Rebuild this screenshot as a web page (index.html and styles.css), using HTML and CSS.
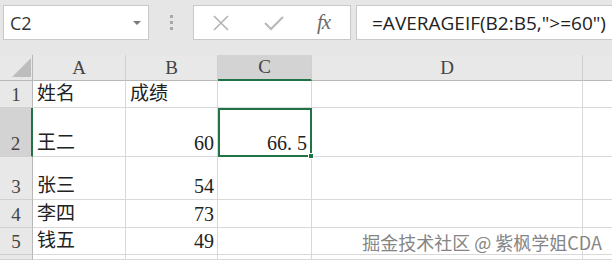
FILE: index.html
```html
<!DOCTYPE html>
<html lang="zh">
<head>
<meta charset="utf-8">
<link rel="stylesheet" href="styles.css">
</head>
<body>
<div class="app">
  <div class="toolbar">
    <div class="namebox">
      <span class="name">C2</span>
      <svg class="dd" width="8" height="5" viewBox="0 0 8 5"><path d="M0 0H8L4 4Z" fill="#7a7a7a"/></svg>
    </div>
    <div class="grip"><i></i><i></i><i></i></div>
    <div class="buttons">
      <svg class="ico" width="20" height="18" viewBox="0 0 20 18"><path d="M3 2L17 16M17 2L3 16" stroke="#b4b4b4" stroke-width="1.6" fill="none"/></svg>
      <svg class="ico" width="22" height="18" viewBox="0 0 22 18"><path d="M2 9L8 15L20 3" stroke="#b8b8b8" stroke-width="2" fill="none"/></svg>
      <span class="fx">fx</span>
    </div>
    <div class="formula">=AVERAGEIF(B2:B5,"&gt;=60")</div>
  </div>
  <div class="sheet">
    <div class="h corner"><span class="tri"></span></div>
    <div class="h col">A</div>
    <div class="h col">B</div>
    <div class="h col sel-col">C</div>
    <div class="h col">D</div>
    <div class="h col last"></div>

    <div class="h row">1</div>
    <div class="c">姓名</div>
    <div class="c">成绩</div>
    <div class="c"></div>
    <div class="c"></div>
    <div class="c last"></div>

    <div class="h row sel-row">2</div>
    <div class="c">王二</div>
    <div class="c num">60</div>
    <div class="c num active">66<span class="dot">.</span>5<span class="handle"></span></div>
    <div class="c"></div>
    <div class="c last"></div>

    <div class="h row">3</div>
    <div class="c">张三</div>
    <div class="c num">54</div>
    <div class="c"></div>
    <div class="c"></div>
    <div class="c last"></div>

    <div class="h row">4</div>
    <div class="c">李四</div>
    <div class="c num">73</div>
    <div class="c"></div>
    <div class="c"></div>
    <div class="c last"></div>

    <div class="h row">5</div>
    <div class="c">钱五</div>
    <div class="c num">49</div>
    <div class="c"></div>
    <div class="c"></div>
    <div class="c last"></div>

    <div class="h row"></div>
    <div class="c"></div>
    <div class="c"></div>
    <div class="c"></div>
    <div class="c"></div>
    <div class="c last"></div>
  </div>
  <div class="watermark">掘金技术社区 @ 紫枫学姐CDA</div>
</div>
</body>
</html>
```
FILE: styles.css
```css
* { box-sizing: border-box; }
html, body { margin: 0; padding: 0; }
body {
  width: 612px;
  height: 260px;
  overflow: hidden;
  background: #e6e6e6;
  font-family: "Liberation Serif", "Noto Sans CJK SC", serif;
}
.app {
  position: relative;
  width: 612px;
  height: 260px;
  overflow: hidden;
}
.toolbar {
  height: 55px;
  display: flex;
  align-items: flex-start;
  padding: 5px 0 0 3px;
  background: #e6e6e6;
}
.namebox {
  width: 146px;
  height: 35px;
  background: #fff;
  border: 1px solid #c9c9c9;
  display: flex;
  align-items: center;
  justify-content: space-between;
  padding: 0 7px 0 6px;
}
.name {
  font-family: "Open Sans", "Liberation Sans", sans-serif;
  font-size: 18px;
  color: #333;
}
.dd { margin-top: 1px; }
.grip {
  width: 44px;
  height: 35px;
  display: flex;
  flex-direction: column;
  align-items: center;
  justify-content: center;
  gap: 3px;
}
.grip i {
  width: 3px;
  height: 3px;
  background: #a8a8a8;
  display: block;
}
.buttons {
  width: 158px;
  height: 35px;
  background: #fff;
  border: 1px solid #c9c9c9;
  display: flex;
  align-items: center;
  padding: 0 0 0 17px;
}
.buttons .ico:nth-child(1) { margin-right: 32px; }
.buttons .ico:nth-child(2) { margin-right: 32px; }
.fx {
  font-family: "Liberation Serif", serif;
  font-style: italic;
  font-size: 21px;
  color: #6b6b6b;
  letter-spacing: -1px;
}
.formula {
  margin-left: 5px;
  flex: 1;
  height: 35px;
  background: #fff;
  border: 1px solid #c9c9c9;
  border-right: none;
  padding-left: 15px;
  display: flex;
  align-items: center;
  font-family: "Open Sans", "Liberation Sans", sans-serif;
  font-size: 19px;
  color: #222;
  white-space: nowrap;
  overflow: hidden;
}
.sheet {
  display: grid;
  grid-template-columns: 33px 93px 92px 94px 271px 29px;
  grid-template-rows: 26px 27px 49px 43px 28px 27px 5px;
  background: #fff;
}
.h {
  background: #e8e8e8;
  color: #444;
  font-size: 19px;
  display: flex;
  align-items: center;
  justify-content: center;
  border-right: 1px solid #d0d0d0;
  border-bottom: 1px solid #d0d0d0;
}
.col { border-bottom: 1px solid #b8b8b8; }
.col.last { border-right: none; }
.row { border-right: 1px solid #b8b8b8; align-items: flex-end; padding-bottom: 1px; }
.corner { position: relative; border-bottom: 1px solid #b8b8b8; border-right: 1px solid #b8b8b8; }
.tri {
  position: absolute;
  right: 1px;
  bottom: 3px;
  width: 0;
  height: 0;
  border-left: 19px solid transparent;
  border-bottom: 19px solid #bdbdbd;
}
.sel-col {
  background: #d3d3d3;
  border-bottom: 2px solid #217346;
}
.sel-row {
  background: #d3d3d3;
  border-right: 2px solid #217346;
}
.c {
  background: #fff;
  border-right: 1px solid #d9d9d9;
  border-bottom: 1px solid #d9d9d9;
  font-size: 19px;
  color: #222;
  display: flex;
  align-items: flex-end;
  padding: 0 3px 1px 4px;
  line-height: 24px;
}
.c.num { font-size: 20px; }
.c.last { border-right: none; }
.num { justify-content: flex-end; }
.dot { display: inline-block; width: 10px; }
.active {
  position: relative;
  border: 2px solid #217346;
  padding: 0 3px 0 4px;
}
.handle {
  position: absolute;
  right: -4px;
  bottom: -4px;
  width: 6px;
  height: 6px;
  background: #217346;
  border: 1px solid #fff;
}
.watermark {
  position: absolute;
  right: 10px;
  top: 229px;
  font-family: "Noto Sans CJK SC", "Noto Sans", sans-serif;
  font-size: 18px;
  color: #858585;
  text-shadow: 0 0 2px #fff, 0 0 2px #fff;
  white-space: nowrap;
}
```
